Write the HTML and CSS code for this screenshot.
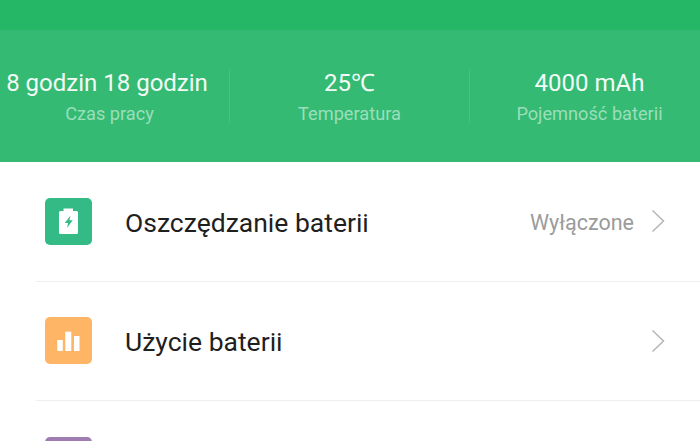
FILE: index.html
```html
<!DOCTYPE html>
<html lang="pl">
<head>
    <meta charset="UTF-8">
    <meta name="viewport" content="width=device-width, initial-scale=1.0">
    <title>Bateria</title>
    <link rel="stylesheet" href="styles.css">
</head>
<body>
    <div class="status-bar"></div>

    <div class="stats">
        <div class="stat">
            <div class="stat-value stat-value-wide">8 godzin 18 godzin</div>
            <div class="stat-label">Czas pracy</div>
        </div>
        <div class="stat">
            <div class="stat-value">25℃</div>
            <div class="stat-label">Temperatura</div>
        </div>
        <div class="stat">
            <div class="stat-value">4000 mAh</div>
            <div class="stat-label">Pojemność baterii</div>
        </div>
    </div>

    <div class="list">
        <div class="row">
            <div class="icon icon-green">
                <svg width="47" height="47" viewBox="0 0 47 47">
                    <path fill="#fff" d="M18.500 10.500h9.500v2.500h3.500a1.500 1.500 0 0 1 1.500 1.500v20a1.500 1.500 0 0 1-1.500 1.500h-16a1.500 1.500 0 0 1-1.500-1.500v-20a1.500 1.500 0 0 1 1.500-1.500h3z"/>
                    <path fill="#34ba85" d="M25.500 17.500L19.800 25h3.300l-1 5 5.600-7.700h-3.300z"/>
                </svg>
            </div>
            <div class="row-title">Oszczędzanie baterii</div>
            <div class="row-value">Wyłączone</div>
            <svg class="chevron" width="14" height="24" viewBox="0 0 14 24">
                <path d="M1.500 1.500L12.500 12L1.500 22.500" fill="none" stroke="#b5b5b5" stroke-width="1.500"/>
            </svg>
        </div>
        <div class="row">
            <div class="icon icon-orange">
                <svg width="47" height="47" viewBox="0 0 47 47">
                    <rect fill="#fff" x="12.300" y="23" width="5.500" height="11"/>
                    <rect fill="#fff" x="20.300" y="14.700" width="6" height="19.300"/>
                    <rect fill="#fff" x="29" y="19" width="5.500" height="15"/>
                </svg>
            </div>
            <div class="row-title">Użycie baterii</div>
            <svg class="chevron" width="14" height="24" viewBox="0 0 14 24">
                <path d="M1.500 1.500L12.500 12L1.500 22.500" fill="none" stroke="#b5b5b5" stroke-width="1.500"/>
            </svg>
        </div>
        <div class="row">
            <div class="icon icon-purple"></div>
        </div>
    </div>
</body>
</html>
```

FILE: styles.css
```css
html, body {
    height: 100%;
    overflow: hidden;
}
body {
    display: flex;
    flex-direction: column;
    margin: 0;
    font-family: Roboto, sans-serif;
    background-color: #fff;
}
.status-bar {
    flex: none;
    height: 30px;
    background-color: #26b766;
}
.stats {
    flex: none;
    display: flex;
    align-items: center;
    height: 132px;
    margin: 0 -9px 0 -11px;
    background-color: #34ba73;
}
.stat {
    flex: 1;
    height: 53px;
    border-left: 1px solid #48c083;
    text-align: center;
    white-space: nowrap;
}
.stat:first-child {
    border-left-color: transparent;
}
.stat-value {
    margin-top: -1px;
    font-size: 24px;
    line-height: 29px;
    color: #f2fbf6;
}
.stat-value-wide {
    padding-right: 5px;
}
.stat-label {
    margin-top: 4px;
    font-size: 18.200px;
    line-height: 24px;
    color: #9adfba;
}
.list {
    flex: 1;
    min-height: 0;
    margin-left: 36px;
    overflow: hidden;
}
.row {
    display: flex;
    align-items: center;
    height: 118.500px;
    padding-left: 9px;
    border-bottom: 1px solid #eee;
}
.row:last-child {
    border-bottom: none;
}
.icon {
    flex: none;
    width: 47px;
    height: 47px;
    border-radius: 5px;
}
.icon svg {
    display: block;
}
.icon-green {
    background-color: #34ba85;
}
.icon-orange {
    background-color: #ffb566;
}
.icon-purple {
    background-color: #a07db0;
}
.row-title {
    flex: 1;
    margin-left: 33px;
    padding-top: 2px;
    font-size: 26.500px;
    color: #1f1f1f;
}
.row-value {
    margin-right: 17px;
    padding-top: 2px;
    font-size: 21.500px;
    color: #9b9b9b;
}
.chevron {
    flex: none;
    margin-right: 35px;
}
```
